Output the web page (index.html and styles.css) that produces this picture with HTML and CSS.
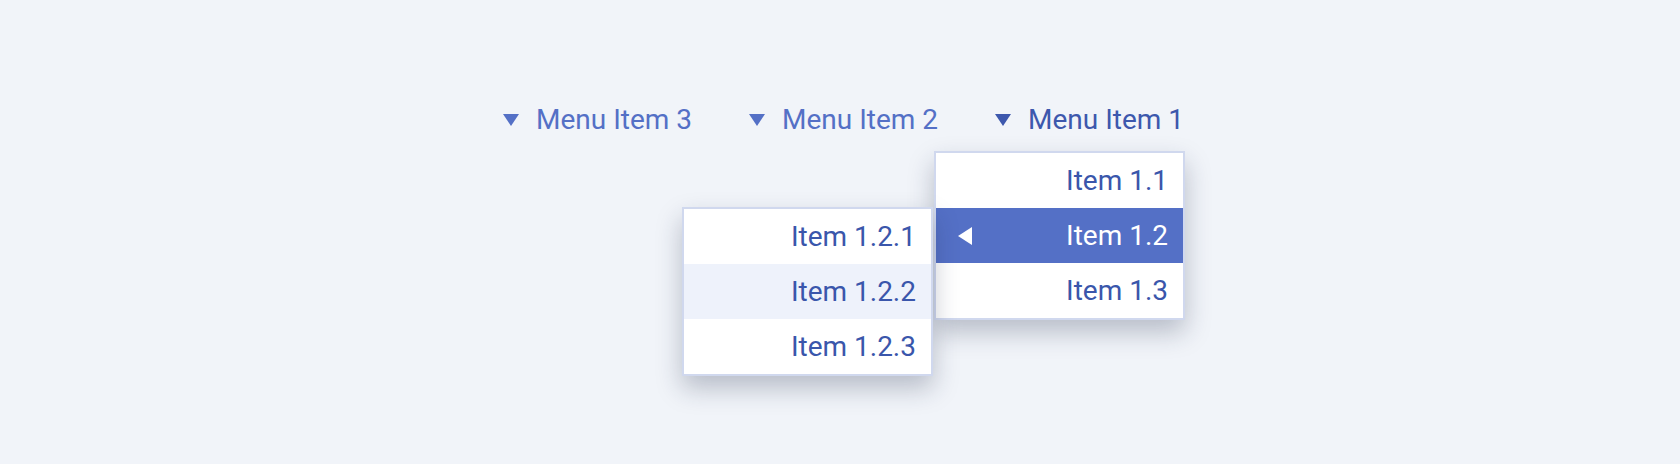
FILE: index.html
```html
<!DOCTYPE html>
<html lang="en">
<head>
<meta charset="utf-8">
<title>Menu</title>
<link rel="stylesheet" href="styles.css">
</head>
<body>
<nav class="menubar">
  <div class="menu-item">
    <svg class="caret" viewBox="0 0 16 12" width="16" height="12"><path d="M0 0H16L8 12Z"/></svg>
    <span class="label">Menu Item 3</span>
  </div>
  <div class="menu-item">
    <svg class="caret" viewBox="0 0 16 12" width="16" height="12"><path d="M0 0H16L8 12Z"/></svg>
    <span class="label">Menu Item 2</span>
  </div>
  <div class="menu-item active">
    <svg class="caret" viewBox="0 0 16 12" width="16" height="12"><path d="M0 0H16L8 12Z"/></svg>
    <span class="label">Menu Item 1</span>
    <ul class="submenu level1">
      <li class="row">Item 1.1</li>
      <li class="row selected">
        <svg class="left-caret" viewBox="0 0 14 18" width="14" height="18"><path d="M14 0V18L0 9Z"/></svg>
        <span>Item 1.2</span>
        <ul class="submenu level2">
          <li class="row">Item 1.2.1</li>
          <li class="row hover">Item 1.2.2</li>
          <li class="row">Item 1.2.3</li>
        </ul>
      </li>
      <li class="row">Item 1.3</li>
    </ul>
  </div>
</nav>
</body>
</html>
```

FILE: styles.css
```css
* { box-sizing: border-box; }

html, body {
  margin: 0;
  padding: 0;
  height: 100%;
}

body {
  background: #f1f4f9;
  font-family: Roboto, "Liberation Sans", Arial, sans-serif;
  overflow: hidden;
}

.menubar {
  display: flex;
  justify-content: flex-start;
  gap: 57px;
  padding-top: 100px;
  padding-left: 503px;
}

.menu-item {
  position: relative;
  display: flex;
  align-items: center;
  gap: 17px;
  height: 40px;
  font-size: 28px;
  line-height: 40px;
  color: #5470c6;
}

.menu-item.active {
  color: #3d58ad;
}

.caret {
  display: block;
  fill: currentColor;
  flex: none;
}

.submenu {
  list-style: none;
  margin: 0;
  padding: 0;
  width: 251px;
  background: #ffffff;
  border: 2px solid #d0d8ee;
  box-shadow: 0 12px 24px rgba(30, 40, 70, 0.27);
  font-size: 28px;
  color: #3a56ab;
}

.level1 {
  position: absolute;
  top: 51px;
  right: -1px;
  z-index: 2;
}

.level2 {
  position: absolute;
  top: -1px;
  right: calc(100% + 3px);
  z-index: 1;
  color: #3a56ab;
}

.row {
  position: relative;
  display: flex;
  align-items: center;
  justify-content: flex-end;
  height: 55px;
  padding: 0 15px 0 22px;
}

.row.selected {
  background: #5470c6;
  color: #ffffff;
  justify-content: space-between;
}

.row.hover {
  background: #eef2fb;
}

.left-caret {
  display: block;
  fill: #ffffff;
}
```
